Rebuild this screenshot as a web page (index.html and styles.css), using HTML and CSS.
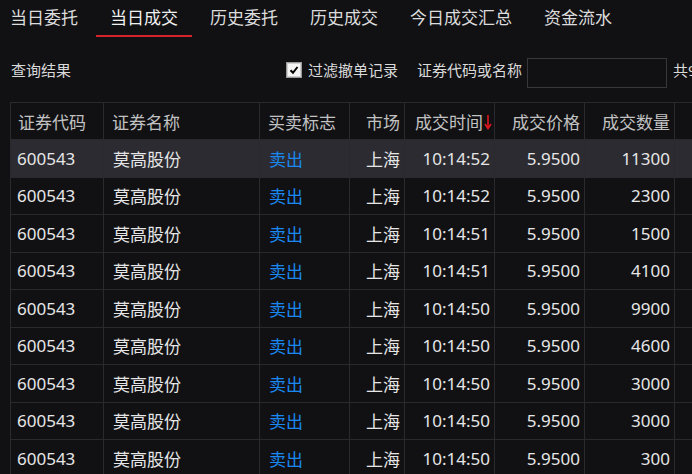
FILE: index.html
```html
<!DOCTYPE html>
<html lang="zh-CN">
<head>
  <meta charset="UTF-8">
  <meta name="viewport" content="width=device-width, initial-scale=1.0">
  <title>当日成交</title>
  <link rel="stylesheet" href="styles.css">
</head>
<body>

  <!-- Tabs -->
  <div class="tabs">
    <div class="tab">当日委托</div>
    <div class="tab active">当日成交</div>
    <div class="tab">历史委托</div>
    <div class="tab">历史成交</div>
    <div class="tab">今日成交汇总</div>
    <div class="tab">资金流水</div>
  </div>

  <!-- Toolbar -->
  <div class="toolbar">
    <span class="title">查询结果</span>
    <label class="filter">
      <span class="checkbox">
        <svg width="10" height="10" viewBox="0 0 10 10"><path d="M1.5 5.2 L4 7.8 L8.5 2" fill="none" stroke="#000" stroke-width="2"/></svg>
      </span>
      过滤撤单记录
    </label>
    <span class="search-label">证券代码或名称</span>
    <input class="search-input" type="text">
    <span class="count">共9条</span>
  </div>

  <!-- Trades Table -->
  <div class="grid">
    <table>
      <colgroup>
        <col style="width:93px">
        <col style="width:156px">
        <col style="width:90px">
        <col style="width:55px">
        <col style="width:90px">
        <col style="width:90px">
        <col style="width:90px">
        <col style="width:90px">
      </colgroup>
      <thead>
        <tr>
          <th class="code">证券代码</th>
          <th>证券名称</th>
          <th>买卖标志</th>
          <th class="num">市场</th>
          <th class="num sorted">成交时间<svg class="sort-arrow" width="8" height="16" viewBox="0 0 8 16"><path d="M4 1 V14" stroke="#e0161d" stroke-width="1.6"/><path d="M1 10 L4 14.5 L7 10" fill="none" stroke="#e0161d" stroke-width="1.6"/></svg></th>
          <th class="num">成交价格</th>
          <th class="num">成交数量</th>
          <th></th>
        </tr>
      </thead>
      <tbody>
        <tr class="selected">
          <td class="code">600543</td><td>莫高股份</td><td class="sell">卖出</td><td class="num">上海</td><td class="num">10:14:52</td><td class="num">5.9500</td><td class="num">11300</td><td></td>
        </tr>
        <tr>
          <td class="code">600543</td><td>莫高股份</td><td class="sell">卖出</td><td class="num">上海</td><td class="num">10:14:52</td><td class="num">5.9500</td><td class="num">2300</td><td></td>
        </tr>
        <tr>
          <td class="code">600543</td><td>莫高股份</td><td class="sell">卖出</td><td class="num">上海</td><td class="num">10:14:51</td><td class="num">5.9500</td><td class="num">1500</td><td></td>
        </tr>
        <tr>
          <td class="code">600543</td><td>莫高股份</td><td class="sell">卖出</td><td class="num">上海</td><td class="num">10:14:51</td><td class="num">5.9500</td><td class="num">4100</td><td></td>
        </tr>
        <tr>
          <td class="code">600543</td><td>莫高股份</td><td class="sell">卖出</td><td class="num">上海</td><td class="num">10:14:50</td><td class="num">5.9500</td><td class="num">9900</td><td></td>
        </tr>
        <tr>
          <td class="code">600543</td><td>莫高股份</td><td class="sell">卖出</td><td class="num">上海</td><td class="num">10:14:50</td><td class="num">5.9500</td><td class="num">4600</td><td></td>
        </tr>
        <tr>
          <td class="code">600543</td><td>莫高股份</td><td class="sell">卖出</td><td class="num">上海</td><td class="num">10:14:50</td><td class="num">5.9500</td><td class="num">3000</td><td></td>
        </tr>
        <tr>
          <td class="code">600543</td><td>莫高股份</td><td class="sell">卖出</td><td class="num">上海</td><td class="num">10:14:50</td><td class="num">5.9500</td><td class="num">3000</td><td></td>
        </tr>
        <tr>
          <td class="code">600543</td><td>莫高股份</td><td class="sell">卖出</td><td class="num">上海</td><td class="num">10:14:50</td><td class="num">5.9500</td><td class="num">300</td><td></td>
        </tr>
      </tbody>
    </table>
  </div>

</body>
</html>
```

FILE: styles.css
```css
/* Page */
body {
  margin: 0;
  width: 692px;
  height: 474px;
  overflow: hidden;
  background-color: #111114;
  color: #e6e6e6;
  font-family: "Noto Sans", "Noto Sans CJK SC", sans-serif;
}

/* Tabs */
.tabs {
  display: flex;
  height: 37px;
  margin-left: -4px;
}

.tab {
  flex-shrink: 0;
  padding: 0 14px;
  margin-right: 4px;
  line-height: 35px;
  font-size: 17px;
  color: #dcdcdc;
  white-space: nowrap;
  border-bottom: 2px solid transparent;
}

.tab.active {
  color: #f0f0f0;
  border-bottom-color: #d6222a;
}

/* Toolbar */
.toolbar {
  display: flex;
  align-items: center;
  height: 65px;
  padding-left: 11px;
  font-size: 15px;
  color: #dadada;
  white-space: nowrap;
}

.toolbar > * {
  flex-shrink: 0;
}

.title {
  width: 275px;
}

.filter {
  display: flex;
  align-items: center;
}

.checkbox {
  display: flex;
  align-items: center;
  justify-content: center;
  box-sizing: border-box;
  width: 16px;
  height: 16px;
  margin-right: 6px;
  background-color: #f4f4f4;
  border: 1px solid #9a9a9a;
  box-shadow: inset 0 0 0 1px #d0d0d0;
}

.search-label {
  margin-left: 19px;
}

.search-input {
  box-sizing: border-box;
  width: 140px;
  height: 30px;
  margin: 6px 0 0 5px;
  background-color: #111114;
  border: 1px solid #38383c;
  outline: none;
}

.count {
  margin-left: 6px;
}

/* Table */
.grid {
  margin-left: 10px;
}

table {
  width: 754px;
  table-layout: fixed;
  border-collapse: collapse;
}

th,
td {
  padding: 0 8px;
  border: 1px solid #2a2a2e;
  font-size: 17px;
  font-weight: normal;
  text-align: left;
  white-space: nowrap;
  overflow: hidden;
}

th {
  height: 36px;
  color: #c2c2c2;
}

td {
  height: 36.5px;
  padding-left: 9px;
}

td.code {
  padding-left: 6px;
}

th.code {
  padding-left: 7px;
}

.num {
  text-align: right;
  padding-right: 4px;
}

th.sorted {
  padding-right: 2px;
}

.sort-arrow {
  margin-left: 1px;
  vertical-align: -1px;
}

.sell {
  color: #1a88f0;
}

tr.selected td {
  background-color: #2b2b31;
}
```
